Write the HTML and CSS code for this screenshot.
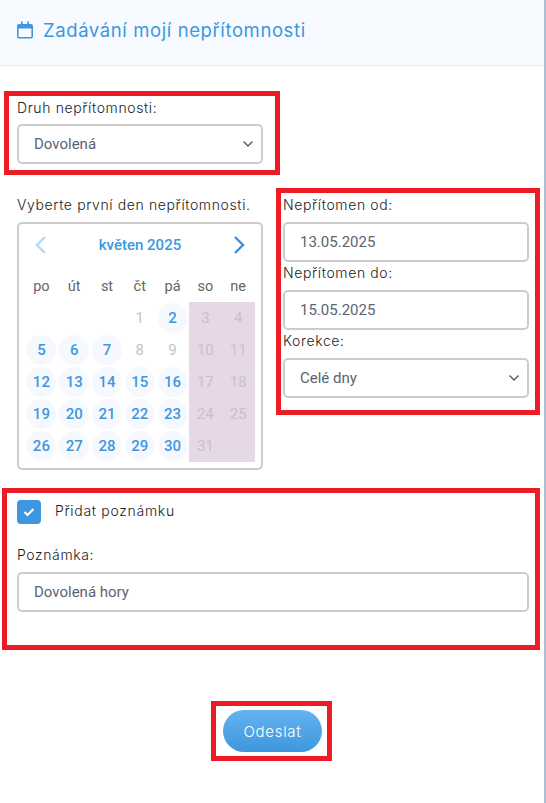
FILE: index.html
```html
<!DOCTYPE html>
<html lang="cs">
<head>
  <meta charset="UTF-8">
  <meta name="viewport" content="width=device-width, initial-scale=1.0">
  <title>Zadávání mojí nepřítomnosti</title>
  <link rel="stylesheet" href="styles.css">
</head>
<body>
  <header class="page-header">
    <svg class="header-icon" viewBox="0 0 16 18" width="16" height="18">
      <path d="M4 0.5h1.6v2.5h4.8V0.5H12V3h2a2 2 0 0 1 2 2v10.5a2 2 0 0 1-2 2H2a2 2 0 0 1-2-2V5a2 2 0 0 1 2-2h2zM1.6 7.5v8a.5.5 0 0 0 .5.5h11.8a.5.5 0 0 0 .5-.5v-8z" fill="#3d97e0"/>
    </svg>
    <h1>Zadávání mojí nepřítomnosti</h1>
  </header>

  <form class="absence-form">
    <section class="mark mark-type">
      <label class="field-label">Druh nepřítomnosti:</label>
      <div class="control control-select">
        <span>Dovolená</span>
        <svg class="chevron" viewBox="0 0 10 6" width="10" height="6"><path d="M.5.5L5 5 9.500.5" fill="none" stroke="#555" stroke-width="1.3"/></svg>
      </div>
    </section>

    <div class="columns">
      <div class="calendar-col">
        <p class="field-label">Vyberte první den nepřítomnosti.</p>
        <div class="calendar">
          <div class="calendar-nav">
            <svg viewBox="0 0 13 20" width="13" height="20"><path d="M11 2L3 10l8 8" fill="none" stroke="#b3d7f4" stroke-width="2.4"/></svg>
            <span class="month">květen 2025</span>
            <svg viewBox="0 0 13 20" width="13" height="20"><path d="M2 2l8 8-8 8" fill="none" stroke="#3d8fdc" stroke-width="2.4"/></svg>
          </div>
          <div class="calendar-grid">
            <div class="weekend-bg"></div>
            <span class="dow">po</span><span class="dow">út</span><span class="dow">st</span><span class="dow">čt</span><span class="dow">pá</span><span class="dow">so</span><span class="dow">ne</span>
            <span></span><span></span><span></span><span class="day">1</span><span class="day on">2</span><span class="day">3</span><span class="day">4</span>
            <span class="day on">5</span><span class="day on">6</span><span class="day on">7</span><span class="day">8</span><span class="day">9</span><span class="day">10</span><span class="day">11</span>
            <span class="day on">12</span><span class="day on">13</span><span class="day on">14</span><span class="day on">15</span><span class="day on">16</span><span class="day">17</span><span class="day">18</span>
            <span class="day on">19</span><span class="day on">20</span><span class="day on">21</span><span class="day on">22</span><span class="day on">23</span><span class="day">24</span><span class="day">25</span>
            <span class="day on">26</span><span class="day on">27</span><span class="day on">28</span><span class="day on">29</span><span class="day on">30</span><span class="day">31</span><span></span>
          </div>
        </div>
      </div>

      <section class="mark mark-dates">
        <label class="field-label">Nepřítomen od:</label>
        <div class="control">13.05.2025</div>
        <label class="field-label">Nepřítomen do:</label>
        <div class="control">15.05.2025</div>
        <label class="field-label">Korekce:</label>
        <div class="control control-select">
          <span>Celé dny</span>
          <svg class="chevron" viewBox="0 0 10 6" width="10" height="6"><path d="M.5.5L5 5 9.500.5" fill="none" stroke="#555" stroke-width="1.3"/></svg>
        </div>
      </section>
    </div>

    <section class="mark mark-note">
      <div class="check-row">
        <span class="checkbox">
          <svg viewBox="0 0 12 10" width="12" height="10"><path d="M1.5 5l3 3 6-6" fill="none" stroke="#fff" stroke-width="2.2"/></svg>
        </span>
        <span class="check-label">Přidat poznámku</span>
      </div>
      <label class="field-label">Poznámka:</label>
      <div class="control">Dovolená hory</div>
    </section>

    <div class="submit-row">
      <div class="mark mark-submit">
        <button type="button" class="send">Odeslat</button>
      </div>
    </div>
  </form>
  <span class="edge-handle"></span>
</body>
</html>
```

FILE: styles.css
```css
* {
  box-sizing: border-box;
}
html {
  background: #fff;
}
body {
  position: relative;
  margin: 0;
  height: 803px;
  overflow: hidden;
  font-family: Inter, sans-serif;
  color: #333;
  border-right: 2px solid #aebed2;
}
.edge-handle {
  position: absolute;
  top: 400px;
  right: -2px;
  width: 2px;
  height: 5px;
  border: 1px solid #555;
  border-right: 0;
  background: #fff;
}
.page-header {
  display: flex;
  align-items: center;
  gap: 10px;
  height: 66px;
  padding-left: 17px;
  background: #f7fafe;
  border-bottom: 1px solid #e8ebef;
}
.header-icon {
  margin-top: -6px;
}
.page-header h1 {
  margin: 0;
  font-size: 18.5px;
  font-weight: 400;
  letter-spacing: 0.6px;
  color: #3d97e0;
  position: relative;
  top: -3px;
}
.absence-form {
  display: flex;
  flex-direction: column;
  padding-top: 25px;
}
.mark {
  border: 5px solid #ed1c24;
  background: #fff;
}
.field-label {
  display: block;
  margin: 0;
  font-size: 14px;
  font-weight: 300;
  line-height: 18px;
  letter-spacing: 0.62px;
  color: #222;
}
.control {
  display: flex;
  align-items: center;
  justify-content: space-between;
  height: 40px;
  padding: 0 8px 0 15px;
  border: 2px solid #ccc;
  border-radius: 5px;
  background: #fff;
  font-family: Roboto, sans-serif;
  font-size: 15px;
  color: #5a6472;
}
.mark-type {
  width: 276px;
  height: 84px;
  margin-left: 4px;
  padding: 3px 12px 0 8px;
}
.mark-type .field-label {
  margin-bottom: 7px;
}
.columns {
  display: flex;
  margin-top: 13px;
}
.calendar-col {
  width: 246px;
  margin-left: 17px;
  padding-top: 8px;
}
.calendar-col .field-label {
  margin-bottom: 8px;
  white-space: nowrap;
}
.calendar {
  height: 248px;
  padding: 0 7px 0 6px;
  border: 2px solid #ccc;
  border-radius: 5px;
}
.calendar-nav {
  display: flex;
  align-items: center;
  justify-content: space-between;
  height: 42px;
  padding: 0 8px 0 9px;
}
.month {
  font-family: Roboto, sans-serif;
  font-size: 15px;
  font-weight: 500;
  color: #3d97e0;
}
.calendar-grid {
  position: relative;
  display: grid;
  grid-template-columns: repeat(7, 32.8px);
  grid-auto-rows: 32px;
  margin-top: 4px;
  width: 230px;
}
.calendar-grid > * {
  position: relative;
}
.weekend-bg {
  position: absolute !important;
  left: 164px;
  top: 32px;
  width: 66px;
  bottom: 0;
  background: #e6d8e6;
}
.dow {
  display: flex;
  align-items: center;
  justify-content: center;
  font-family: Roboto, sans-serif;
  font-size: 14.5px;
  color: #666;
}
.day {
  display: flex;
  align-items: center;
  justify-content: center;
  width: 30px;
  height: 30px;
  margin: 1px 1.4px;
  border-radius: 50%;
  font-family: Roboto, sans-serif;
  font-size: 15px;
  color: #c4c4c4;
}
.day.on {
  background: #f5f9fe;
  color: #3d97e0;
  font-weight: 500;
}
.mark-dates {
  width: 264px;
  height: 227px;
  margin-left: 13px;
  padding: 3px 6px 0 2px;
}
.mark-dates .field-label {
  margin-bottom: 8px;
}
.mark-dates .control {
  margin-bottom: 2px;
}
.mark-note {
  width: 538px;
  height: 162px;
  margin: 18px 0 0 2px;
  padding: 7px 6px 0 10px;
}
.check-row {
  display: flex;
  align-items: center;
  gap: 14px;
  margin-bottom: 22px;
}
.checkbox {
  display: flex;
  align-items: center;
  justify-content: center;
  width: 24px;
  height: 24px;
  border-radius: 4px;
  background: #3d97e0;
}
.check-label {
  font-size: 14px;
  font-weight: 300;
  letter-spacing: 0.7px;
  color: #222;
  position: relative;
  top: -2px;
}
.mark-note .field-label {
  margin-bottom: 8px;
}
.submit-row {
  display: flex;
  justify-content: center;
  margin-top: 51px;
}
.mark-submit {
  width: 121px;
  height: 60px;
  padding: 4px 7px 0;
  margin-left: -1px;
}
.send {
  display: block;
  width: 99px;
  height: 42px;
  border: 0;
  border-radius: 21px;
  background: linear-gradient(#65b3ef, #3d97de);
  color: #fff;
  font-family: Inter, sans-serif;
  font-size: 15px;
  font-weight: 300;
  letter-spacing: 0.7px;
}
```
